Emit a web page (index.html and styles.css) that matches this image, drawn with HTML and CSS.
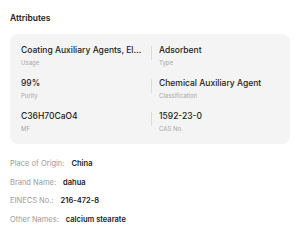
FILE: index.html
```html
<!DOCTYPE html>
<html lang="en">
<head>
  <meta charset="UTF-8" />
  <meta name="viewport" content="width=device-width, initial-scale=1.0"/>
  <title>Attributes</title>
  <link rel="stylesheet" href="styles.css">
</head>
<body>

<div class="attributes">
  <h2>Attributes</h2>

  <div class="attr-card">
    <div class="attr-row">
      <div class="attr-cell left">
        <div class="attr-value">Coating Auxiliary Agents, Electronics Chemicals</div>
        <div class="attr-label">Usage</div>
      </div>
      <span class="sep"></span>
      <div class="attr-cell">
        <div class="attr-value">Adsorbent</div>
        <div class="attr-label">Type</div>
      </div>
    </div>
    <div class="attr-row">
      <div class="attr-cell left">
        <div class="attr-value">99%</div>
        <div class="attr-label">Purity</div>
      </div>
      <span class="sep"></span>
      <div class="attr-cell">
        <div class="attr-value">Chemical Auxiliary Agent</div>
        <div class="attr-label">Classification</div>
      </div>
    </div>
    <div class="attr-row">
      <div class="attr-cell left">
        <div class="attr-value">C36H70CaO4</div>
        <div class="attr-label">MF</div>
      </div>
      <span class="sep"></span>
      <div class="attr-cell">
        <div class="attr-value">1592-23-0</div>
        <div class="attr-label">CAS No.</div>
      </div>
    </div>
  </div>

  <ul class="attr-list">
    <li><span class="key">Place of Origin:</span><span class="val">China</span></li>
    <li><span class="key">Brand Name:</span><span class="val">dahua</span></li>
    <li><span class="key">EINECS No.:</span><span class="val">216-472-8</span></li>
    <li><span class="key">Other Names:</span><span class="val">calcium stearate</span></li>
  </ul>
</div>

</body>
</html>
```

FILE: styles.css
```css
* {
  box-sizing: border-box;
  margin: 0;
  padding: 0;
}

html, body {
  background: #fff;
  color: #222;
  font-family: Inter, "Noto Sans", sans-serif;
}

.attributes {
  padding: 12px 10px;
}

.attributes h2 {
  font-size: 8.5px;
  font-weight: 600;
  line-height: 12px;
  color: #222;
}

.attr-card {
  margin-top: 10px;
  background: #f4f4f4;
  border-radius: 8px;
  padding: 11px 11px 11px;
  display: flex;
  flex-direction: column;
  gap: 11px;
}

.attr-row {
  display: flex;
  align-items: flex-start;
}

.attr-cell {
  flex: 1;
  min-width: 0;
}

.attr-cell.left {
  flex: 0 0 125px;
}

.sep {
  width: 1px;
  height: 14px;
  margin: 1px 7px 0 5px;
  background: #dcdcdc;
}

.attr-value {
  font-size: 8.5px;
  font-weight: 500;
  line-height: 11px;
  white-space: nowrap;
  overflow: hidden;
  text-overflow: ellipsis;
}

.attr-label {
  margin-top: 2px;
  font-size: 6px;
  line-height: 9px;
  color: #a6a6a6;
}

.attr-list {
  list-style: none;
  margin-top: 14px;
  display: flex;
  flex-direction: column;
  gap: 7.5px;
}

.attr-list li {
  font-size: 7.5px;
  line-height: 11px;
}

.attr-list .key {
  color: #9a9a9a;
  margin-right: 7px;
}

.attr-list .val {
  color: #222;
  font-weight: 600;
}
```
